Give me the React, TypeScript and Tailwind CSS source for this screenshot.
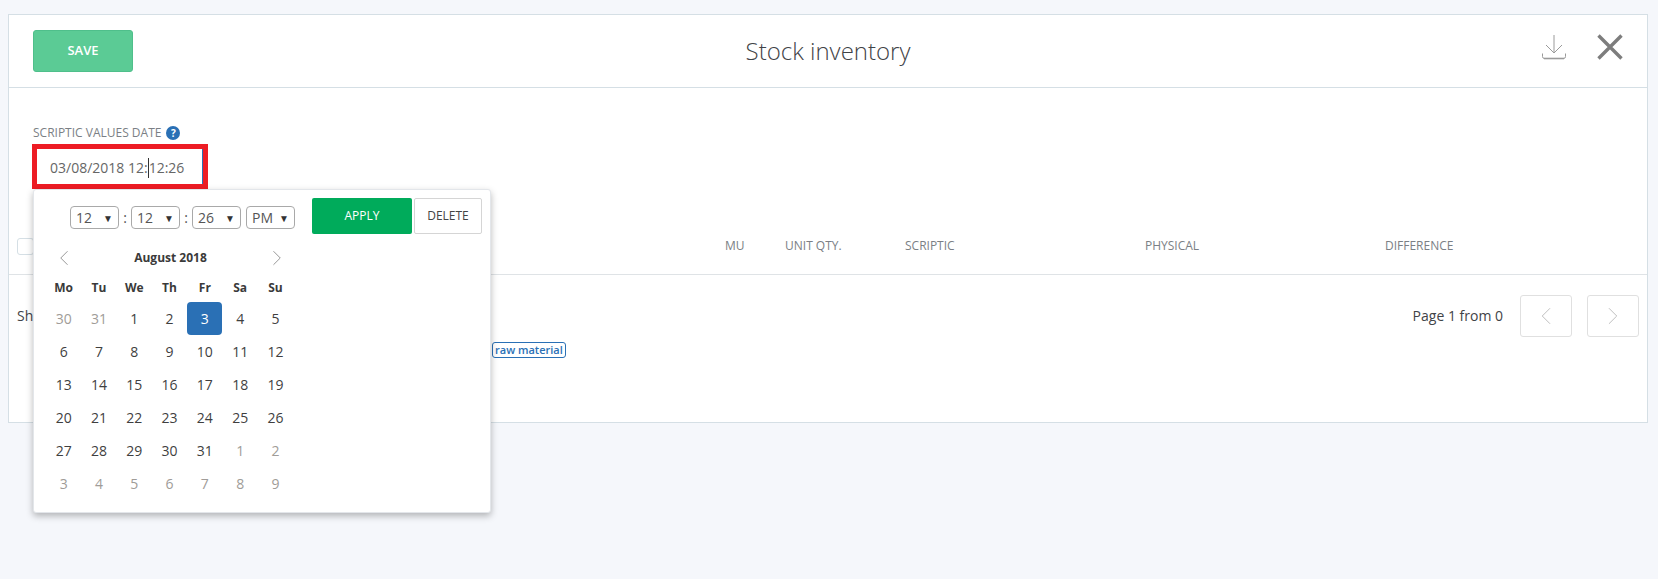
import { ChevronLeft, ChevronRight } from "lucide-react";

const weeks = [
  ["30", "31", "1", "2", "3", "4", "5"],
  ["6", "7", "8", "9", "10", "11", "12"],
  ["13", "14", "15", "16", "17", "18", "19"],
  ["20", "21", "22", "23", "24", "25", "26"],
  ["27", "28", "29", "30", "31", "1", "2"],
  ["3", "4", "5", "6", "7", "8", "9"],
];

const dayNames = ["Mo", "Tu", "We", "Th", "Fr", "Sa", "Su"];

const isMuted = (row: number, day: string) =>
  (row === 0 && Number(day) > 20) || (row === 4 && Number(day) < 10) || row === 5;

const TimeSelect = ({ value, width }: { value: string; width: string }) => (
  <div
    className={`flex h-[23px] items-center justify-between rounded-[4px] border border-[#a9a9a9] pl-[5px] pr-[5px] text-[14px] text-[#555] ${width}`}
  >
    <span>{value}</span>
    <span className="text-[10px] leading-none text-[#333]">▼</span>
  </div>
);

const Calendar = () => (
  <div className="absolute left-[24px] top-[174px] z-10 h-[324px] w-[458px] rounded-[3px] border border-[#e3e6ea] bg-white shadow-[0_3px_7px_rgba(0,0,0,0.28)]">
    <div className="flex items-start pl-[36px] pt-[8px]">
      <div className="mt-[8px] flex items-center">
        <TimeSelect value="12" width="w-[49px]" />
        <span className="w-[12px] text-center text-[14px] text-[#555]">:</span>
        <TimeSelect value="12" width="w-[49px]" />
        <span className="w-[12px] text-center text-[14px] text-[#555]">:</span>
        <TimeSelect value="26" width="w-[49px]" />
        <span className="w-[5px]" />
        <TimeSelect value="PM" width="w-[49px]" />
      </div>
      <button className="ml-[17px] h-[36px] w-[100px] rounded-[2px] bg-[#00ab5b] text-[12px] font-medium text-white">
        APPLY
      </button>
      <button className="ml-[2px] h-[36px] w-[68px] rounded-[2px] border border-[#d5d5d5] bg-white text-[12px] text-[#444]">
        DELETE
      </button>
    </div>
    <div className="mt-[14px] flex h-[20px] w-[256px] items-center justify-between pl-[17px]">
      <ChevronLeft size={26} strokeWidth={0.8} className="text-[#888]" />
      <span className="text-[12px] font-bold text-[#3a3a3a]">August 2018</span>
      <ChevronRight size={26} strokeWidth={0.8} className="text-[#888]" />
    </div>
    <div className="mt-[8px] pl-[12px]">
      <div className="grid h-[24px] grid-cols-[repeat(7,35.3px)] items-center text-center text-[12px] font-bold text-[#3a3a3a]">
        {dayNames.map((name) => (
          <span key={name}>{name}</span>
        ))}
      </div>
      <div className="mt-[2px] grid grid-cols-[repeat(7,35.3px)] text-center text-[14px] text-[#3f3f3f]">
        {weeks.map((week, row) =>
          week.map((day, i) => {
            const selected = row === 0 && day === "3";
            return (
              <span
                key={`${row}-${i}`}
                className={`flex h-[33px] items-center justify-center rounded-[4px] ${
                  selected ? "bg-[#2a70b5] text-white" : isMuted(row, day) ? "text-[#a09c98]" : ""
                }`}
              >
                {day}
              </span>
            );
          }),
        )}
      </div>
    </div>
  </div>
);

const App = () => {
  return (
    <div className="h-[579px] bg-[#f5f7fb] pb-[156px] pl-[8px] pr-[10px] pt-[14px] font-['Open_Sans',sans-serif]">
      <div className="relative h-[409px] border border-[#d5dfe5] bg-white">
        <header className="grid h-[73px] grid-cols-[1fr_auto_1fr] items-center border-b border-[#d5dfe5] pl-[24px] pr-[24px]">
          <div>
            <button className="h-[42px] w-[100px] rounded-[3px] border border-[#4fbf8b] bg-[#5bcb95] text-[13px] font-semibold text-white">
              SAVE
            </button>
          </div>
          <h1 className="text-[24px] font-light text-[#3f4347]">Stock inventory</h1>
          <div className="mb-[8px] flex items-center justify-end gap-[30px]">
            <svg width="26" height="26" viewBox="0 0 26 26" fill="none" stroke="#9a9a9a" strokeWidth="1">
              <path d="M13 1v18M5 11l8 8 8-8" />
              <path d="M1.5 19.5v3a2 2 0 0 0 2 2h19a2 2 0 0 0 2-2v-3" />
              <path d="M3 24.5h20" strokeWidth="1.6" />
            </svg>
            <svg width="26" height="26" viewBox="0 0 26 26" fill="none" stroke="#7d7d7d" strokeWidth="3.4">
              <path d="M1.5 1.5l23 23M24.5 1.5l-23 23" />
            </svg>
          </div>
        </header>

        <div className="px-[24px] pt-[36px]">
          <div className="flex h-[18px] items-center gap-[5px] text-[12px] text-[#7b7f85]">
            <span>SCRIPTIC VALUES DATE</span>
            <span className="flex size-[14px] items-center justify-center rounded-full bg-[#2a70b5] text-[10px] font-bold text-white">
              ?
            </span>
          </div>
          <div className="ml-[-1px] mt-[2px] h-[45px] w-[176px] border-[5px] border-[#ed1c24]">
            <div className="flex h-full items-center border-r border-[#2a70b5] pl-[13px] pt-[2px] text-[14px] text-[#666]">
              <span>03/08/2018 12:</span>
              <span className="h-[20px] w-px bg-[#333]" />
              <span>12:26</span>
            </div>
          </div>
        </div>

        <Calendar />

        <div className="mt-[41px] flex h-[45px] items-center border-b border-[#dfe3e6] pb-[12px] text-[12px] text-[#7b7f85]">
          <span className="ml-[8px] size-[17px] rounded-[3px] border border-[#d5dfe5]" />
          <span className="ml-[691px] w-[60px]">MU</span>
          <span className="w-[120px]">UNIT QTY.</span>
          <span className="w-[240px]">SCRIPTIC</span>
          <span className="w-[240px]">PHYSICAL</span>
          <span>DIFFERENCE</span>
        </div>

        <div className="flex items-start pl-[8px] pr-[8px] pt-[20px] text-[14px] text-[#3f4347]">
          <span className="mt-[10px]">Sh</span>
          <span className="ml-auto mt-[10px]">Page 1 from 0</span>
          <button className="ml-[17px] flex h-[42px] w-[52px] items-center justify-center rounded-[3px] border border-[#e0e0e0]">
            <ChevronLeft size={30} strokeWidth={0.8} className="text-[#c0c0c0]" />
          </button>
          <button className="ml-[15px] flex h-[42px] w-[52px] items-center justify-center rounded-[3px] border border-[#e0e0e0]">
            <ChevronRight size={30} strokeWidth={0.8} className="text-[#c0c0c0]" />
          </button>
        </div>
        <div className="ml-[483px] mt-[5px] w-fit rounded-[3px] border border-[#2a70b5] px-[2px] text-[11px] font-semibold leading-[14px] text-[#2a70b5]">
          raw material
        </div>
      </div>
    </div>
  );
};

export default App;
